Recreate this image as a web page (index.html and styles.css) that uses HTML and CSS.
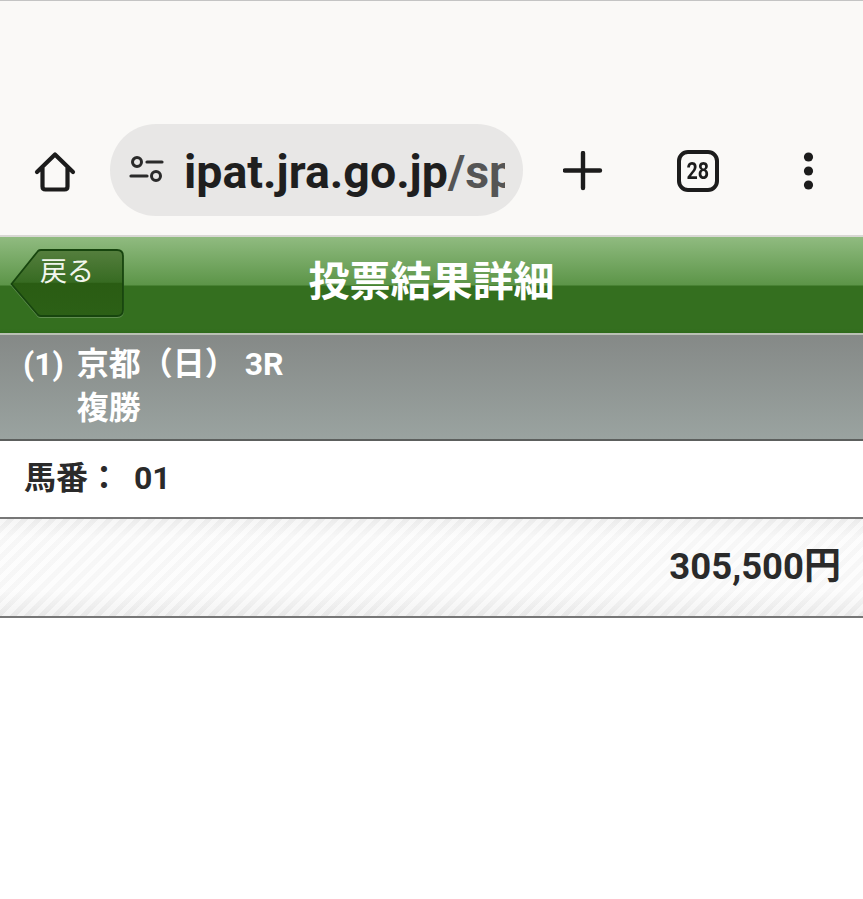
FILE: index.html
```html
<!DOCTYPE html>
<html lang="ja">
<head>
  <meta charset="UTF-8">
  <meta name="viewport" content="width=device-width, initial-scale=1">
  <title>投票結果詳細</title>
  <link rel="stylesheet" href="styles.css">
</head>

<body>
  <!-- browser toolbar -->
  <div class="toolbar">
    <svg class="ico-home" width="46" height="46" viewBox="0 0 46 46">
      <path d="M5 23 L23 5.500 L41 23 M10.500 18.500 V37.500 Q10.500 40.500 13.500 40.500 H32.500 Q35.500 40.500 35.500 37.500 V18.500" fill="none" stroke="#1c1c1c" stroke-width="4.200" stroke-linecap="round" stroke-linejoin="round"/>
    </svg>
    <div class="urlbar">
      <svg class="ico-tune" width="36" height="30" viewBox="0 0 36 30">
        <circle cx="8" cy="8" r="4.500" fill="none" stroke="#2a2a2a" stroke-width="3"/>
        <path d="M18 8 H33 M2 22 H18" stroke="#2a2a2a" stroke-width="3.200" stroke-linecap="round"/>
        <circle cx="27" cy="22" r="4.500" fill="none" stroke="#2a2a2a" stroke-width="3"/>
      </svg>
      <div class="url"><b>ipat.jra.go.jp</b><span>/sp</span></div>
    </div>
    <svg class="ico-plus" width="40" height="40" viewBox="0 0 40 40">
      <path d="M20 2 V37 M2 19.500 H37" stroke="#1c1c1c" stroke-width="4.400" stroke-linecap="round"/>
    </svg>
    <div class="tabs"><span class="tabs-count">28</span></div>
    <svg class="ico-more" width="14" height="40" viewBox="0 0 14 40">
      <circle cx="6.500" cy="6" r="4.600" fill="#1c1c1c"/>
      <circle cx="6.500" cy="20" r="4.600" fill="#1c1c1c"/>
      <circle cx="6.500" cy="34" r="4.600" fill="#1c1c1c"/>
    </svg>
  </div>

  <!-- page header -->
  <div class="header">
    <a class="back">
      <svg class="back-bg" width="116" height="70" viewBox="0 0 116 70">
        <defs>
          <linearGradient id="backfill" x1="0" y1="0" x2="0" y2="1">
            <stop offset="0" stop-color="#557f3e"/>
            <stop offset="0.49" stop-color="#376b22"/>
            <stop offset="0.5" stop-color="#2a5c13"/>
            <stop offset="1" stop-color="#2c6016"/>
          </linearGradient>
        </defs>
        <path d="M1.500 35 L28 2 Q29 1 31 1 H107 Q113 1 113 7 V61 Q113 67 107 67 H31 Q29 67 28 66 Z" fill="url(#backfill)" stroke="#17450e" stroke-width="1.800"/>
      </svg>
      <span class="back-label">戻る</span>
    </a>
    <h1 class="title">投票結果詳細</h1>
  </div>

  <!-- race -->
  <div class="race">
    <div class="race-no">(1)</div>
    <div class="race-info">
      <div>京都（日） 3R</div>
      <div>複勝</div>
    </div>
  </div>

  <div class="horse">馬番： <span class="horse-no">01</span></div>

  <div class="amount">305,500<span class="yen">円</span></div>
</body>

</html>
```

FILE: styles.css
```css
body {
  margin: 0;
  background: #fff;
  font-family: Roboto, "Noto Sans CJK JP", sans-serif;
  color: #2a2a2a;
}

/* browser toolbar */
.toolbar {
  box-sizing: border-box;
  height: 237px;
  padding-top: 123px;
  background: #faf9f7;
  border-top: 1px solid #c4c4c4;
  border-bottom: 2px solid #d8d8d4;
  display: flex;
  align-items: flex-start;
}
.ico-home {
  margin: 25px 0 0 32px;
}
.urlbar {
  box-sizing: border-box;
  width: 413px;
  height: 92px;
  margin-left: 32px;
  padding: 0 18px 0 19px;
  background: #e8e7e6;
  border-radius: 46px;
  display: flex;
  align-items: center;
}
.ico-tune {
  flex: none;
  margin-right: 19px;
  margin-top: -3px;
}
.url {
  overflow: hidden;
  white-space: nowrap;
  font-size: 46.500px;
  line-height: 92px;
  margin-top: 3px;
}
.url b {
  font-weight: 700;
  color: #1f1f1f;
}
.url span {
  font-weight: 700;
  color: #555;
}
.ico-plus {
  margin: 27px 0 0 40px;
}
.tabs {
  box-sizing: border-box;
  width: 42px;
  height: 42px;
  margin: 26px 0 0 74px;
  border: 4px solid #1c1c1c;
  border-radius: 11px;
  font-size: 24px;
  font-weight: 700;
  line-height: 34px;
  text-align: center;
  color: #1c1c1c;
}
.tabs-count {
  display: inline-block;
  transform: scaleX(0.82);
}
.ico-more {
  margin: 27px 0 0 83px;
}

/* page header */
.header {
  position: relative;
  height: 96px;
  background: linear-gradient(#90bb80 0, #5c9548 48px, #346f1f 49px, #346f1f 92px, #2e6a1b 96px);
  border-bottom: 2px solid #b9c0b4;
}
.back {
  position: absolute;
  left: 10px;
  top: 12px;
  width: 116px;
  height: 70px;
}
.back-bg {
  display: block;
  filter: drop-shadow(0 1px 0 rgba(255, 255, 255, 0.22));
}
.back-label {
  position: absolute;
  left: 30px;
  top: 4px;
  font-size: 27px;
  line-height: 38px;
  color: #f2f6ee;
}
.title {
  margin: 0;
  font-size: 41px;
  font-weight: 700;
  line-height: 90px;
  text-align: center;
  color: #fff;
}

/* race */
.race {
  box-sizing: border-box;
  height: 106px;
  padding: 7px 0 0 23px;
  background: linear-gradient(#858987, #9aa3a0);
  border-bottom: 2px solid #5c5f5d;
  display: flex;
  gap: 13px;
  font-size: 32px;
  font-weight: 700;
  line-height: 44px;
  color: #fff;
}

.horse {
  box-sizing: border-box;
  height: 76px;
  padding-left: 24px;
  font-size: 32px;
  font-weight: 700;
  line-height: 74px;
}
.horse-no {
  margin-left: 6px;
}

.amount {
  box-sizing: border-box;
  height: 101px;
  padding-right: 22px;
  border-top: 2px solid #777;
  border-bottom: 2px solid #777;
  background:
    repeating-linear-gradient(135deg, rgba(255,255,255,0.5) 0 5px, rgba(232,232,232,0.18) 5px 10px),
    linear-gradient(#ececec, #fafafa 18px, #fafafa 72px, #e8e8e8);
  font-size: 36.500px;
  font-weight: 700;
  line-height: 95px;
  text-align: right;
}
.yen {
  font-size: 37px;
}
```
